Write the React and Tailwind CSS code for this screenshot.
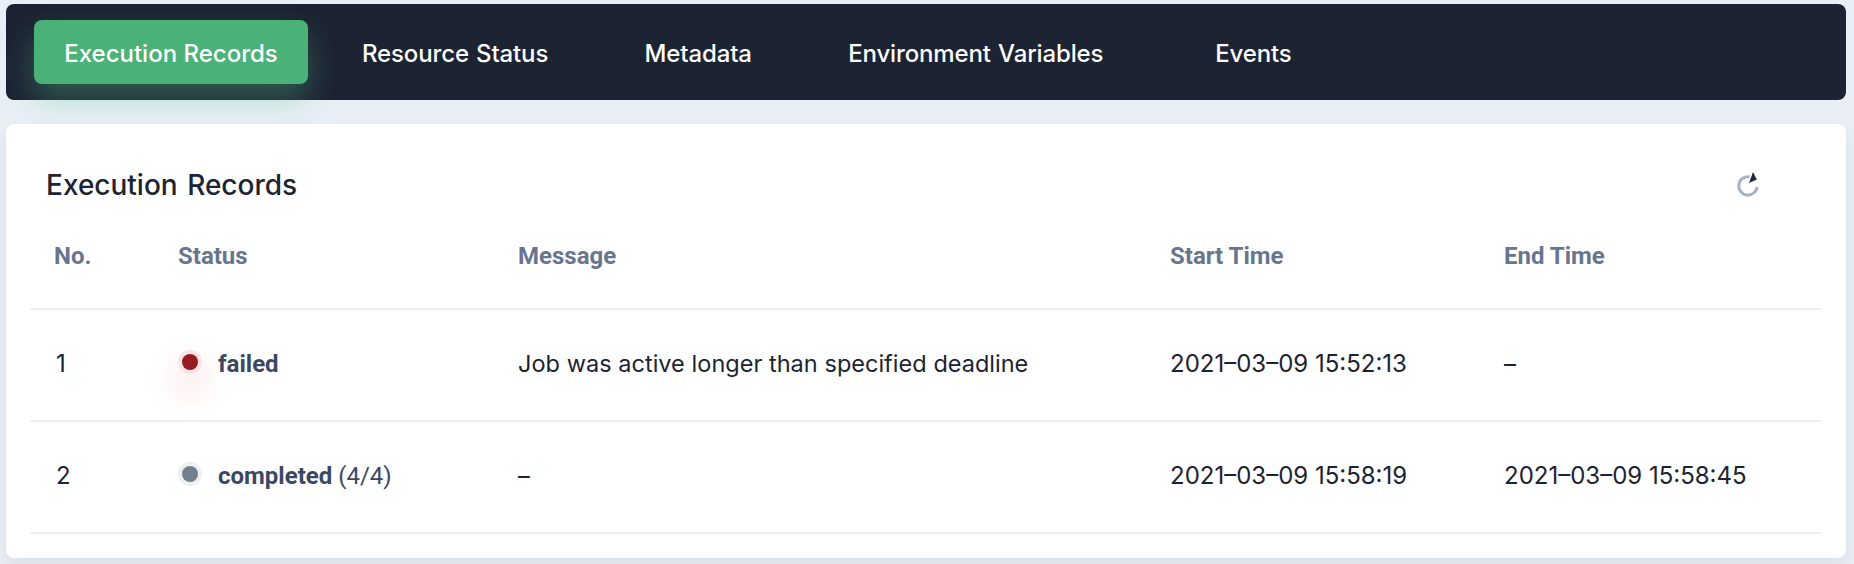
const tabs = ['Execution Records', 'Resource Status', 'Metadata', 'Environment Variables', 'Events'];

const records = [
  { no: 1, status: 'failed', message: 'Job was active longer than specified deadline', start: '2021–03–09 15:52:13', end: '–' },
  { no: 2, status: 'completed', count: '(4/4)', message: '–', start: '2021–03–09 15:58:19', end: '2021–03–09 15:58:45' },
];

const columns = 'grid grid-cols-[124px_340px_652px_334px_1fr] mx-6 pl-6 border-b-2 border-[#eaf0f5]';

function RefreshIcon() {
  return (
    <svg width="32" height="32" viewBox="0 0 32 32" fill="none">
      <path d="M17.6 7.8A9.2 9.2 0 1 0 25.1 18" stroke="#a5b4c4" strokeWidth="3" />
      <path d="M21 3L24.8 10.4L17 14Z" fill="#1e2a3b" />
    </svg>
  );
}

function StatusDot({ status }) {
  const failed = status === 'failed';
  return (
    <span
      className={
        failed
          ? 'flex size-6 items-center justify-center rounded-full bg-[#fae4e4] shadow-[0_16px_32px_0_rgba(234,70,65,0.26)]'
          : 'flex size-6 items-center justify-center rounded-full bg-[#eef0f2]'
      }
    >
      <span className={failed ? 'size-4 rounded-full bg-[#981d20]' : 'size-4 rounded-full bg-[#72808c]'} />
    </span>
  );
}

export default function App() {
  return (
    <div className="h-[564px] overflow-hidden bg-[#eaeff7] pt-1 pr-2 pl-1.5 font-['Inter',sans-serif] text-[24px] text-[#1c2333]">
      <nav className="flex h-24 items-center gap-6 rounded-lg bg-[#1c2332] px-7">
        {tabs.map((tab, i) => (
          <button
            key={tab}
            className={
              i === 0
                ? 'h-16 w-[274px] rounded-lg bg-[#4ab179] pt-[3px] font-medium whitespace-nowrap text-white shadow-[0_16px_32px_0_rgba(85,188,138,0.36)]'
                : 'h-16 min-w-48 rounded-lg px-[30px] pt-[3px] font-medium tracking-[-0.14px] whitespace-nowrap text-white [word-spacing:1px]'
            }
          >
            {tab}
          </button>
        ))}
      </nav>

      <section className="relative mt-6 h-[434px] rounded-lg bg-white pt-10 shadow-[0_8px_16px_0_rgba(36,56,46,0.08)]">
        <header className="flex h-10 items-center justify-between pr-[82px] pl-10">
          <h2 className="pt-px text-[28px] leading-10 font-medium [word-spacing:2px]">Execution Records</h2>
          <button className="mt-0.5" aria-label="Refresh">
            <RefreshIcon />
          </button>
        </header>

        <div className={`${columns} h-[106px] items-center font-['Roboto'] font-bold text-[#67768e]`}>
          <span>No.</span>
          <span>Status</span>
          <span>Message</span>
          <span>Start Time</span>
          <span>End Time</span>
        </div>

        {records.map((r) => (
          <div key={r.no} className={`${columns} h-28 items-center whitespace-nowrap`}>
            <span className="pb-[3px] pl-0.5">{r.no}</span>
            <span className="flex items-center gap-4 pb-0.5 font-['Roboto'] text-[#3b4863]">
              <span className="pb-1">
                <StatusDot status={r.status} />
              </span>
              <span>
                <b className="font-bold">{r.status}</b>
                {r.count && ` ${r.count}`}
              </span>
            </span>
            <span className="pb-[3px] text-[23.5px] [word-spacing:0.2px]">{r.message}</span>
            <span className="pb-[3px]">{r.start}</span>
            <span className="pb-[3px]">{r.end}</span>
          </div>
        ))}
      </section>
    </div>
  );
}
